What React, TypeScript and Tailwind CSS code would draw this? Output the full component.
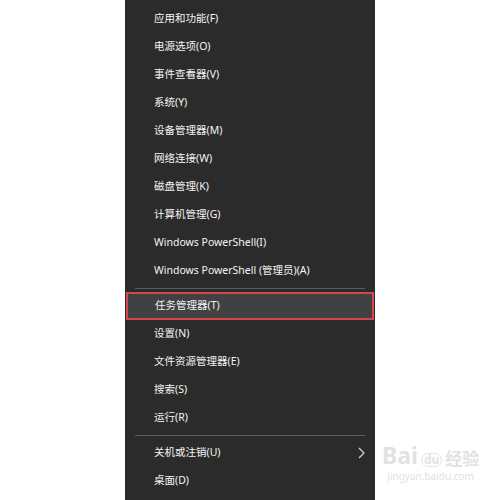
const items1 = [
  '应用和功能(F)',
  '电源选项(O)',
  '事件查看器(V)',
  '系统(Y)',
  '设备管理器(M)',
  '网络连接(W)',
  '磁盘管理(K)',
  '计算机管理(G)',
  'Windows PowerShell(I)',
  'Windows PowerShell (管理员)(A)',
];

const items2 = ['设置(N)', '文件资源管理器(E)', '搜索(S)', '运行(R)'];

const font = {
  fontFamily: '"Noto Sans", "Noto Sans CJK SC", sans-serif',
};

const Row = ({ label }: { label: string }) => (
  <div className="flex h-[28px] items-center pl-[29px] text-[10.5px] text-[#f4f4f4]">
    {label}
  </div>
);

const Separator = () => (
  <div className="flex h-[7px] items-start pt-[3px]">
    <div className="mx-[10px] h-px w-full bg-[#5c5c5c]" />
  </div>
);

const Chevron = () => (
  <svg width="7" height="12" viewBox="0 0 7 12" className="mr-[10px]">
    <polyline points="1,1 6,6 1,11" fill="none" stroke="#d8d8d8" strokeWidth="1.2" />
  </svg>
);

export default function App() {
  return (
    <div className="relative flex h-[500px] w-[500px] bg-white" style={font}>
      <div className="ml-[125px] flex h-full w-[250px] flex-col bg-[#2b2b2b] pt-[5px]">
        {items1.map((label) => (
          <Row key={label} label={label} />
        ))}
        <Separator />
        <div className="mx-px flex h-[28px] items-center border-2 border-[#d6474c] bg-[#414141] pl-[27px] text-[10.5px] text-[#f4f4f4]">
          任务管理器(T)
        </div>
        {items2.map((label) => (
          <Row key={label} label={label} />
        ))}
        <Separator />
        <div className="flex h-[28px] items-center justify-between pl-[29px] text-[10.5px] text-[#f4f4f4]">
          <span>关机或注销(U)</span>
          <Chevron />
        </div>
        <Row label="桌面(D)" />
      </div>
      <div className="absolute left-[382px] top-[444px] flex flex-col items-center text-[#e2e2e2]">
        <div className="flex items-end gap-[3px] text-[23px] font-bold leading-none">
          <span>Bai</span>
          <span className="rounded-full border border-[#e2e2e2] px-[2px] text-[12px]">du</span>
          <span className="text-[17px]">经验</span>
        </div>
        <div className="mt-[4px] text-[10px] leading-none">jingyan.baidu.com</div>
      </div>
    </div>
  );
}
